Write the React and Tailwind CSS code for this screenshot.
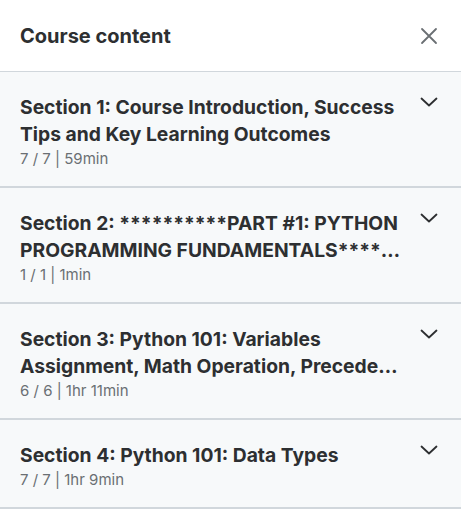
// Course content sidebar: header + collapsed section list

const sections = [
  {
    line1: "Section 1: Course Introduction, Success",
    line2: "Tips and Key Learning Outcomes",
    meta: "7 / 7 | 59min",
  },
  {
    line1: "Section 2: **********PART #1: PYTHON",
    line2: "PROGRAMMING FUNDAMENTALS**********",
    meta: "1 / 1 | 1min",
  },
  {
    line1: "Section 3: Python 101: Variables",
    line2: "Assignment, Math Operation, Precedence and Order of Operations",
    meta: "6 / 6 | 1hr 11min",
  },
  {
    line1: "Section 4: Python 101: Data Types",
    meta: "7 / 7 | 1hr 9min",
  },
];

function Chevron() {
  return (
    <svg width="18" height="18" viewBox="0 0 18 18" fill="none" className="shrink-0">
      <path d="M1.5 5.5 L9 12.5 L16.5 5.5" stroke="#2d2f31" strokeWidth="1.8" strokeLinecap="round" strokeLinejoin="round" />
    </svg>
  );
}

function CloseIcon() {
  return (
    <svg width="18" height="18" viewBox="0 0 18 18" fill="none">
      <path d="M2 2 L16 16 M16 2 L2 16" stroke="#6a6f73" strokeWidth="1.8" strokeLinecap="round" />
    </svg>
  );
}

export default function App() {
  return (
    <div className="w-[461px] h-[512px] overflow-hidden bg-white text-[#2d2f31] font-['Inter','Liberation_Sans',sans-serif]">
      {/* header */}
      <div className="h-[72px] flex items-center justify-between pl-5 pr-[23px] border-b border-[#d1d7dc]">
        <span className="text-[20px] font-bold">Course content</span>
        <CloseIcon />
      </div>

      {/* sections */}
      {sections.map((s, i) => (
        <div key={i} className="bg-[#f7f9fa] border-b-2 border-[#d1d7dc] pl-5 pr-[23px] pt-[22px] pb-[18px] flex items-start gap-3">
          <div className="flex-1 min-w-0">
            <div className="text-[19.3px] font-bold leading-[27px] pb-px">
              <div className="whitespace-nowrap">{s.line1}</div>
              {s.line2 && (
                <div className="whitespace-nowrap overflow-hidden text-ellipsis">{s.line2}</div>
              )}
            </div>
            <div className="text-[15px] leading-[19px] text-[#6a6f73]">{s.meta}</div>
          </div>
          <div className="-mt-[1px]">
            <Chevron />
          </div>
        </div>
      ))}
    </div>
  );
}
